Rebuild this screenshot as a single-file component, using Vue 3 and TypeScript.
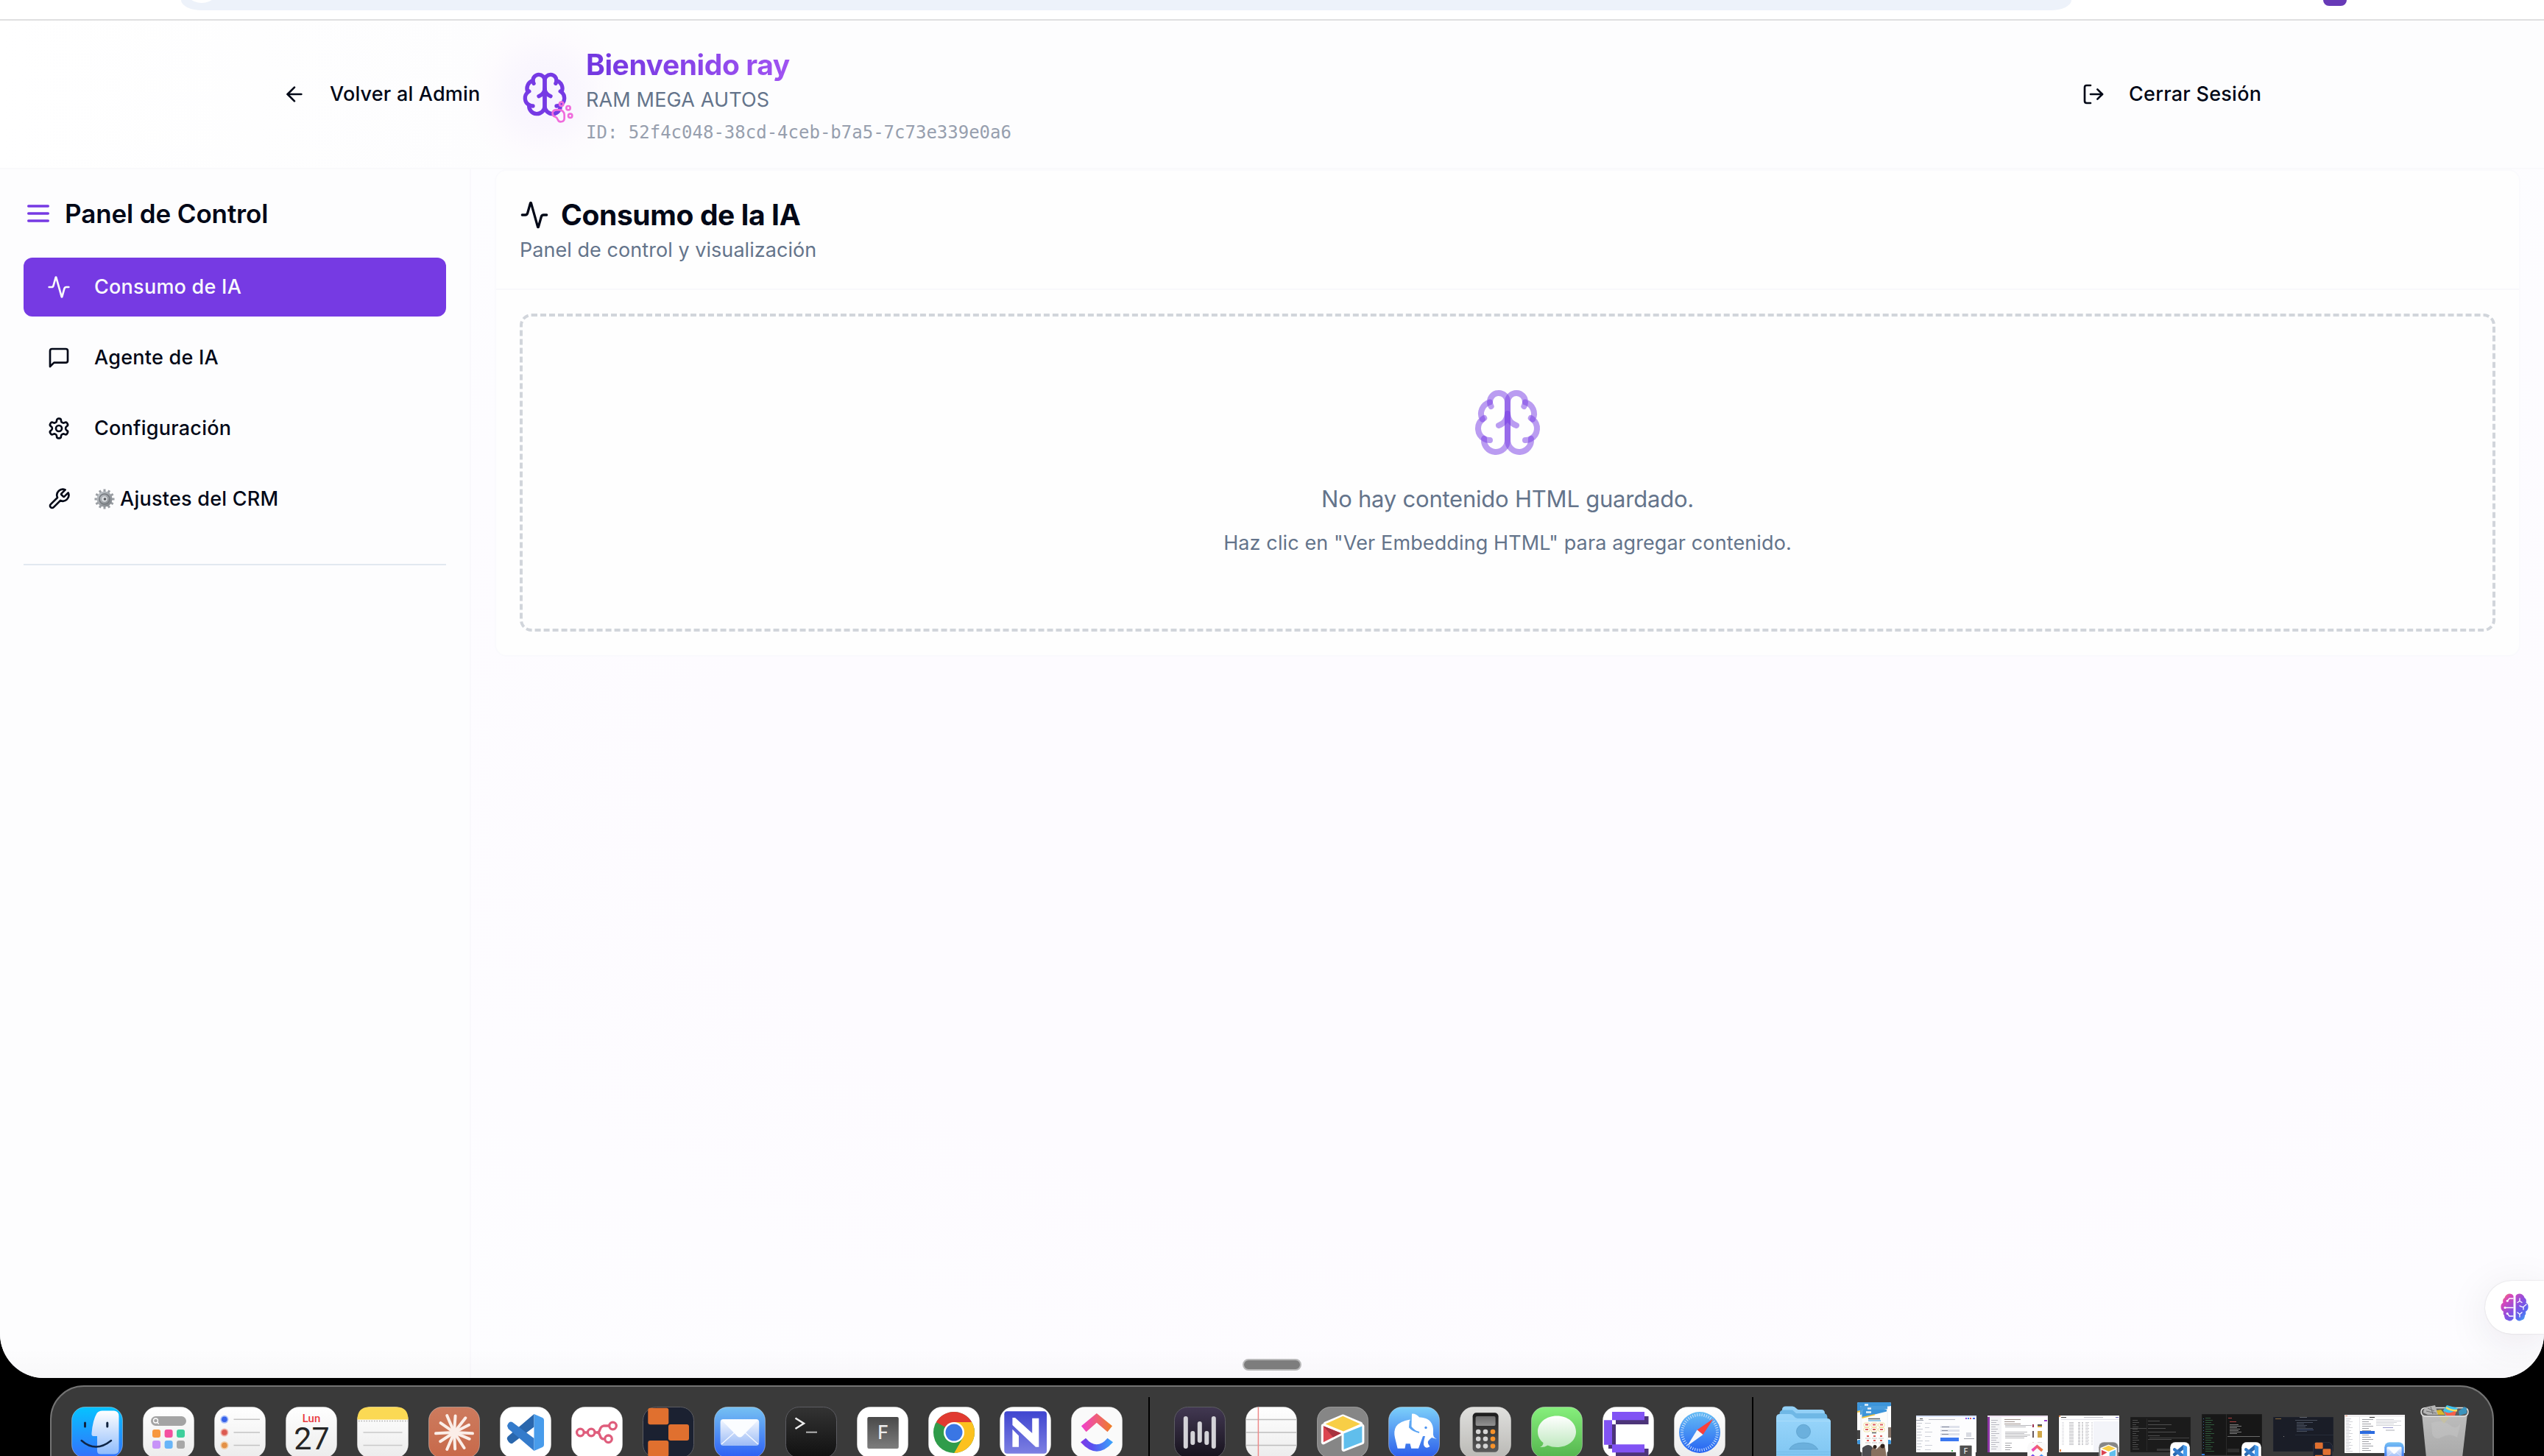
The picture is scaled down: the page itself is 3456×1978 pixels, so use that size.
<script setup lang="ts">
import { h, type FunctionalComponent } from 'vue'

const glyphs: Record<string, string[]> = {
  arrowLeft: ['m12 19-7-7 7-7', 'M19 12H5'],
  logOut: ['M9 21H5a2 2 0 0 1-2-2V5a2 2 0 0 1 2-2h4', 'm16 17 5-5-5-5', 'M21 12H9'],
  menu: ['M4 6h16', 'M4 12h16', 'M4 18h16'],
  activity: ['M22 12h-2.48a2 2 0 0 0-1.93 1.46l-2.35 8.36a.25.25 0 0 1-.48 0L9.24 2.18a.25.25 0 0 0-.48 0l-2.35 8.36A2 2 0 0 1 4.49 12H2'],
  message: ['M21 15a2 2 0 0 1-2 2H7l-4 4V5a2 2 0 0 1 2-2h14a2 2 0 0 1 2 2z'],
  settings: [
    'M12.22 2h-.44a2 2 0 0 0-2 2v.18a2 2 0 0 1-1 1.73l-.43.25a2 2 0 0 1-2 0l-.15-.08a2 2 0 0 0-2.73.73l-.22.38a2 2 0 0 0 .73 2.73l.15.1a2 2 0 0 1 1 1.72v.51a2 2 0 0 1-1 1.74l-.15.09a2 2 0 0 0-.73 2.73l.22.38a2 2 0 0 0 2.73.73l.15-.08a2 2 0 0 1 2 0l.43.25a2 2 0 0 1 1 1.73V20a2 2 0 0 0 2 2h.44a2 2 0 0 0 2-2v-.18a2 2 0 0 1 1-1.73l.43-.25a2 2 0 0 1 2 0l.15.08a2 2 0 0 0 2.73-.73l.22-.39a2 2 0 0 0-.73-2.73l-.15-.08a2 2 0 0 1-1-1.74v-.5a2 2 0 0 1 1-1.74l.15-.09a2 2 0 0 0 .73-2.73l-.22-.38a2 2 0 0 0-2.73-.73l-.15.08a2 2 0 0 1-2 0l-.43-.25a2 2 0 0 1-1-1.73V4a2 2 0 0 0-2-2z',
    'M15 12a3 3 0 1 1-6 0 3 3 0 0 1 6 0z',
  ],
  wrench: ['M14.7 6.3a1 1 0 0 0 0 1.4l1.6 1.6a1 1 0 0 0 1.4 0l3.77-3.77a6 6 0 0 1-7.94 7.94l-6.91 6.91a2.12 2.12 0 0 1-3-3l6.91-6.91a6 6 0 0 1 7.94-7.94l-3.76 3.76z'],
  brain: [
    'M12 5a3 3 0 1 0-5.997.125 4 4 0 0 0-2.526 5.77 4 4 0 0 0 .556 6.588A4 4 0 1 0 12 18Z',
    'M12 5a3 3 0 1 1 5.997.125 4 4 0 0 1 2.526 5.77 4 4 0 0 1-.556 6.588A4 4 0 1 1 12 18Z',
    'M15 13a4.5 4.5 0 0 1-3-4 4.5 4.5 0 0 1-3 4',
    'M17.599 6.5a3 3 0 0 0 .399-1.375',
    'M6.003 5.125A3 3 0 0 0 6.401 6.5',
    'M3.477 10.896a4 4 0 0 1 .585-.396',
    'M19.938 10.5a4 4 0 0 1 .585.396',
    'M6 18a4 4 0 0 1-1.967-.516',
    'M19.967 17.484A4 4 0 0 1 18 18',
  ],
  paw: [
    'M13 4a2 2 0 1 1-4 0 2 2 0 0 1 4 0z',
    'M20 8a2 2 0 1 1-4 0 2 2 0 0 1 4 0z',
    'M22 16a2 2 0 1 1-4 0 2 2 0 0 1 4 0z',
    'M9 10a5 5 0 0 1 5 5v3.5a3.5 3.5 0 0 1-6.84 1.045Q6.52 17.48 4.46 16.84A3.5 3.5 0 0 1 5.5 10Z',
  ],
}

const Icon: FunctionalComponent<{ name: string }> = (props) =>
  h(
    'svg',
    { viewBox: '0 0 24 24', fill: 'none', stroke: 'currentColor', 'stroke-width': 2, 'stroke-linecap': 'round', 'stroke-linejoin': 'round' },
    glyphs[props.name].map((d) => h('path', { d })),
  )
Icon.props = ['name']

interface NavItem { icon: string; label: string; active?: boolean; gear?: boolean }
const nav: NavItem[] = [
  { icon: 'activity', label: 'Consumo de IA', active: true },
  { icon: 'message', label: 'Agente de IA' },
  { icon: 'settings', label: 'Configuración' },
  { icon: 'wrench', label: 'Ajustes del CRM', gear: true },
]

const gearTeeth = Array.from({ length: 12 }, (_, i) => i * 30)
const rays = [-1, 33, 58, 88, 108, 142, 172, 198, 232, 262, 300, 332]
const ticks = Array.from({ length: 48 }, (_, i) => i * 7.5)

type Bar = [x: number, y: number, w: number, h: number, color: string]
const rows = (x: number, y0: number, y1: number, step: number, w: number[], color: string): Bar[] => {
  const out: Bar[] = []
  for (let y = y0, i = 0; y < y1; y += step, i++) out.push([x, y, w[i % w.length], 1, color])
  return out
}

interface Thumb { top: number; h: number; bg: string; edge: string; bars: Bar[]; badge: string }
const thumbs: Thumb[] = [
  {
    top: 39, h: 50, bg: '#fdfdfe', edge: '#f4f4f6', badge: 'form',
    bars: [
      [0, 0, 82, 2, '#d5dff6'], [5, 4, 4, 1, '#555'], [17, 5, 36, 1, '#b9bcc4'], [0, 6, 10, 1, '#9aa0ac'],
      ...rows(1, 10, 48, 4, [7, 5, 8, 6], '#c5c8d0'), ...rows(12, 10, 48, 6, [8, 6, 10], '#cdd0d8'),
      [67, 3, 2, 2, '#a04be0'], [70, 3, 2, 2, '#3b82f6'], [73, 3, 2, 2, '#e05a5a'], [77, 3, 3, 2, '#4a6cf0'],
      [33, 14, 26, 3, '#dfe2ec'], [33, 19, 26, 3, '#dfe2ec'], [33, 24, 26, 3, '#dfe2ec'], [35, 15, 10, 1, '#8b90a0'], [35, 20, 8, 1, '#8b90a0'], [35, 25, 9, 1, '#8b90a0'],
      [33, 30, 25, 5, '#3b78f0'], [68, 23, 7, 6, '#d9dbe2'], [65, 31, 14, 1, '#a5a8b2'], [48, 47, 2, 2, '#3faf4c'],
    ],
  },
  {
    top: 39, h: 50, bg: '#ffffff', edge: '#eeeeee', badge: 'click',
    bars: [
      [0, 0, 82, 2, '#ecdfee'], [0, 2, 3, 48, '#8e35a6'], [3, 2, 16, 48, '#f5f5f7'],
      ...rows(5, 6, 48, 3, [9, 7, 11, 6], '#b9bac2'), ...rows(23, 5, 12, 3, [22, 14], '#9c8f8a'),
      ...rows(24, 13, 17, 2, [36, 28], '#b7b7bb'), ...rows(24, 22, 31, 2, [30, 26, 34], '#b7b7bb'), ...rows(24, 37, 48, 3, [9, 7], '#a7a7ab'),
      [61, 12, 2, 4, '#9a3050'], [68, 12, 6, 2, '#555'], [68, 14, 6, 2, '#d8a83c'], [61, 21, 2, 9, '#6a5a60'], [68, 21, 6, 9, '#d2a848'], [61, 36, 2, 2, '#a04040'], [68, 36, 6, 2, '#666'], [77, 6, 4, 2, '#9a40c8'],
    ],
  },
  {
    top: 39, h: 50, bg: '#ffffff', edge: '#eeeeee', badge: 'air',
    bars: [
      [0, 0, 2, 2, '#e58a4a'], [3, 2, 7, 1, '#444'], [34, 2, 26, 1, '#c0c0c8'], [77, 2, 4, 1, '#6b62b8'], [3, 5, 79, 1, '#e2e2ea'], [47, 8, 35, 42, '#f3f4f9'],
      ...rows(4, 9, 40, 2, [3], '#e2e2e6'), ...rows(14, 9, 40, 2, [6], '#c2c2c6'), ...rows(26, 9, 40, 2, [3], '#b8b8bc'), ...rows(31, 9, 40, 2, [2], '#b8b8bc'), ...rows(36, 9, 40, 2, [5, 4], '#cbcbcf'), ...rows(44, 9, 40, 2, [2], '#dadade'),
      [1, 46, 2, 3, '#e58a4a'],
    ],
  },
  {
    top: 41, h: 48, bg: '#1b1b1b', edge: '#242424', badge: 'code',
    bars: [
      ...rows(3, 4, 46, 3, [7, 9, 5, 8], '#4c4c4c'), [0, 15, 22, 1, '#4a4a4a'], [22, 2, 1, 44, '#2a2a2a'],
      ...rows(24, 5, 34, 5, [16, 32, 24, 38], '#4e4e4e'), [26, 28, 54, 1, '#444'], [36, 43, 18, 3, '#3a3a3a'],
    ],
  },
  {
    top: 37, h: 56, bg: '#171717', edge: '#242424', badge: 'code',
    bars: [
      ...rows(5, 5, 52, 3, [7, 10, 8, 12], '#2f5a3a'), ...rows(2, 6, 50, 4, [1], '#3b6a9a'), [33, 0, 1, 56, '#2b2b2b'],
      [36, 5, 5, 1, '#b04040'], [38, 10, 9, 1, '#b04040'], ...rows(38, 14, 28, 2, [12, 16, 10, 14], '#7c7c7c'), [35, 30, 44, 1, '#6a6a6a'], [35, 47, 16, 5, '#2e2e2e'], [0, 54, 4, 2, '#2f7de0'],
    ],
  },
  {
    top: 41, h: 47, bg: '#1a1d27', edge: '#242833', badge: 'repl',
    bars: [
      [3, 2, 8, 1, '#8a6a3a'], [36, 0, 10, 1, '#60646e'], [30, 4, 30, 1, '#4a4f5c'], ...rows(32, 7, 20, 2, [22, 10, 14, 12], '#4a5160'), [36, 17, 19, 1, '#41527a'], [30, 24, 52, 1, '#262b38'], [14, 26, 1, 1, '#8a8a8a'],
    ],
  },
  {
    top: 38, h: 52, bg: '#ffffff', edge: '#f2f2f2', badge: 'mail',
    bars: [
      [0, 0, 82, 3, '#f0eff0'], [1, 1, 3, 1, '#e58a6a'], [34, 3, 7, 1, '#333'], ...rows(2, 5, 50, 2, [7, 5, 9, 4], '#d2d3d8'), [20, 3, 1, 49, '#e6e6ea'], ...rows(24, 6, 50, 3, [15, 9, 12], '#9fa0a6'),
      [21, 22, 20, 4, '#2b6be0'], ...rows(43, 6, 16, 2, [24, 34, 28], '#d2d3d8'), [52, 17, 14, 1, '#9a9bd0'], [56, 20, 12, 2, '#d5d6da'],
    ],
  },
]
</script>

<template>
  <div class="stage">
    <svg class="defs" aria-hidden="true">
      <defs>
        <linearGradient id="gFinder" x2="0" y2="1"><stop stop-color="#06c3ff" /><stop offset="1" stop-color="#3470fb" /></linearGradient>
        <linearGradient id="gFace" x2="0" y2="1"><stop stop-color="#fff" /><stop offset="1" stop-color="#8fbcfc" /></linearGradient>
        <linearGradient id="gWhite" x2="0" y2="1"><stop stop-color="#fff" /><stop offset="1" stop-color="#ececec" /></linearGradient>
        <linearGradient id="gMail" x2="0" y2="1"><stop stop-color="#76c1f3" /><stop offset="1" stop-color="#2c5ff4" /></linearGradient>
        <linearGradient id="gEnv" x2="0" y2="1"><stop stop-color="#f4f8ff" /><stop offset="1" stop-color="#9dbcf6" /></linearGradient>
        <linearGradient id="gTerm" x2="0" y2="1"><stop stop-color="#333" /><stop offset="1" stop-color="#101010" /></linearGradient>
        <linearGradient id="gN" x2="0" y2="1"><stop stop-color="#3f45d0" /><stop offset="1" stop-color="#7d80e2" /></linearGradient>
        <linearGradient id="gUp"><stop stop-color="#f03fd0" /><stop offset="1" stop-color="#ee7f22" /></linearGradient>
        <linearGradient id="gDown"><stop stop-color="#8338e8" /><stop offset=".35" stop-color="#5a50ef" /><stop offset="1" stop-color="#3aa6fb" /></linearGradient>
        <linearGradient id="gWave" x2="0" y2="1"><stop stop-color="#423852" /><stop offset="1" stop-color="#16121c" /></linearGradient>
        <linearGradient id="gTable" x2="0" y2="1"><stop stop-color="#7cd0fa" /><stop offset="1" stop-color="#2b5cea" /></linearGradient>
        <linearGradient id="gCalc" x2="0" y2="1"><stop stop-color="#e0e0de" /><stop offset="1" stop-color="#bab9b5" /></linearGradient>
        <linearGradient id="gCalcBody" x2="0" y2="1"><stop stop-color="#1c1c1c" /><stop offset="1" stop-color="#5b5b5b" /></linearGradient>
        <linearGradient id="gScreen" x2="0" y2="1"><stop stop-color="#6c6c6c" /><stop offset="1" stop-color="#929292" /></linearGradient>
        <linearGradient id="gMsg" x2="0" y2="1"><stop stop-color="#86ef7c" /><stop offset="1" stop-color="#55b54e" /></linearGradient>
        <linearGradient id="gBubble" x2="0" y2="1"><stop stop-color="#fff" /><stop offset="1" stop-color="#bfe8bf" /></linearGradient>
        <linearGradient id="gSafari" x2="0" y2="1"><stop stop-color="#66bdf4" /><stop offset="1" stop-color="#2562f3" /></linearGradient>
        <linearGradient id="gFolder" x2="0" y2="1"><stop stop-color="#9ad6fb" /><stop offset="1" stop-color="#7fc6f2" /></linearGradient>
        <linearGradient id="gClaude" x2="0" y2="1"><stop stop-color="#cd7b5e" /><stop offset="1" stop-color="#c7694a" /></linearGradient>
        <linearGradient id="gTrash" x2="0" y2="1"><stop stop-color="#bdbdbd" /><stop offset="1" stop-color="#aaaaaa" /></linearGradient>
        <linearGradient id="gF" x2="0" y2="1"><stop stop-color="#494949" /><stop offset="1" stop-color="#7d7d7d" /></linearGradient>
        <linearGradient id="gGear" x2="1" y2="1"><stop stop-color="#c9ced3" /><stop offset="1" stop-color="#777b80" /></linearGradient>
        <linearGradient id="gMind" x1="0" y1="0" x2="1" y2="1"><stop stop-color="#f0a03a" /><stop offset=".2" stop-color="#dc48b8" /><stop offset=".52" stop-color="#8a4fe0" /><stop offset=".75" stop-color="#5b64ee" /><stop offset="1" stop-color="#38c4f8" /></linearGradient>
        <g id="logoCode">
          <path d="M46.5 10 V27.5 L17 50 Q13 51 10 44.5 Q9 42 12 39.5Z" fill="#2a67ad" />
          <path d="M10 26 Q12.500 19 17 21 L46.500 43 V60 L11.500 30Z" fill="#347bcb" />
          <path d="M46.500 10 L58 15 Q60 16 60 18 V52 Q60 54 58 55 L46.500 60Z" fill="#489ceb" />
        </g>
        <g id="logoClick">
          <path d="M34.800 9 L56 26.300 L49.500 34.300 L34.800 21.700 L20.600 34.300 L13.900 26.300Z" fill="url(#gUp)" />
          <path d="M13 48.300 L20 42.700 Q34.800 60 49.500 42.700 L57 48.300 Q35 73 13 48.300Z" fill="url(#gDown)" />
        </g>
        <g id="logoRepl" fill="#e0702f">
          <rect x="7.300" y="1.700" width="28" height="22.500" rx="3" />
          <rect x="35" y="24" width="28" height="22" rx="3" />
          <rect x="7.300" y="46" width="28" height="22" rx="3" />
        </g>
        <g id="logoMail">
          <rect x="8.600" y="17" width="52.600" height="36" rx="4" fill="url(#gEnv)" />
          <path d="M10 51 L28 35 M60 51 L42 35" stroke="#f4f8ff" stroke-width="1.500" />
          <path d="M10 18 H60 L38.500 40 Q35 43 31.500 40Z" fill="#fbfdff" />
        </g>
      </defs>
    </svg>

    <div class="window">
      <div class="toolbar">
        <div class="omnibox"><span class="site-info"></span></div>
        <div class="extension"></div>
      </div>

      <header class="header">
        <button class="link back"><Icon name="arrowLeft" class="i32" /><span>Volver al Admin</span></button>
        <div class="brand">
          <div class="logo"><Icon name="brain" class="i64" /><Icon name="paw" class="paw" /></div>
          <div class="who">
            <h1>Bienvenido ray</h1>
            <p class="company">RAM MEGA AUTOS</p>
            <p class="uid">ID: 52f4c048-38cd-4ceb-b7a5-7c73e339e0a6</p>
          </div>
        </div>
        <button class="link out"><Icon name="logOut" class="i32" /><span>Cerrar Sesión</span></button>
      </header>

      <div class="body">
        <aside class="sidebar">
          <h2><Icon name="menu" class="i40" />Panel de Control</h2>
          <nav>
            <a v-for="n in nav" :key="n.label" :class="{ active: n.active }">
              <Icon :name="n.icon" class="i32" />
              <svg v-if="n.gear" class="gear" viewBox="0 0 28 28">
                <rect v-for="a in gearTeeth" :key="a" x="12.500" y=".500" width="3" height="6" fill="#9a9ea3" :transform="`rotate(${a} 14 14)`" />
                <circle cx="14" cy="14" r="10.500" fill="url(#gGear)" />
                <circle cx="14" cy="14" r="7" fill="none" stroke="#75797e" stroke-width="1.500" />
                <circle cx="14" cy="14" r="3.800" fill="#d9dcdf" /><circle cx="14.500" cy="14" r="1.800" fill="#55585c" />
              </svg>
              <span>{{ n.label }}</span>
            </a>
          </nav>
          <hr />
        </aside>

        <main class="main">
          <section class="card">
            <div class="card-head">
              <h3><Icon name="activity" class="i40" />Consumo de la IA</h3>
              <p>Panel de control y visualización</p>
            </div>
            <div class="card-body">
              <div class="empty">
                <Icon name="brain" class="i96" />
                <p class="lead">No hay contenido HTML guardado.</p>
                <p class="hint">Haz clic en "Ver Embedding HTML" para agregar contenido.</p>
              </div>
            </div>
          </section>
        </main>
      </div>

      <div class="bubble">
        <svg viewBox="0 0 38 38">
          <path d="M17.500 3.500 V34.500 Q14 39 9.500 36.500 Q5 35.500 5 30 Q3 28 4 25 Q0 22.500 .500 18 Q0 15 3.500 12.500 Q2 8 5.500 6 Q7 1 12 .500 Q16 .500 17.500 3.500Z M20.500 3.500 V34.500 Q24 39 28.500 36.500 Q33 35.500 33 30 Q35 28 34 25 Q38 22.500 37.500 18 Q38 15 34.500 12.500 Q36 8 32.500 6 Q31 1 26 .500 Q22 .500 20.500 3.500Z" fill="url(#gMind)" />
          <g fill="none" stroke="#fff" stroke-width="1.300" stroke-linecap="round"><path d="M17 7H12L9.500 10M17 19.500H6M17 31H12L9.500 28M26 7v3.500l-3 2M26 10.500l3 2M26 17q3 2 5 1.500l4-3.500M31 18.500V22M23 26l3 2.500 3-2.500M26 28.500V32" /></g>
          <circle cx="9.200" cy="10.200" r="1.500" fill="#fff" /><circle cx="6" cy="19.500" r="1.500" fill="#fff" /><circle cx="9.200" cy="27.500" r="1.500" fill="#fff" />
        </svg>
      </div>
      <div class="handle"></div>
    </div>

    <div class="dock">
      <div class="apps">
        <svg viewBox="0 0 70 70">
          <rect class="tile" fill="url(#gFinder)" />
          <path d="M42 5.500 H58 Q64.500 6 64.500 13 V58 Q64.500 64.500 58 64.500 H40 Q35 64.500 35 60 V40 H30 Q27 40 27.500 36 Q29 18 34.500 9 Q37 5.500 42 5.500Z" fill="url(#gFace)" />
          <path d="M18.500 22v5M48.800 22v5" stroke="#10233f" stroke-width="3" stroke-linecap="round" />
          <path d="M13.700 46 Q33 63 54 46" fill="none" stroke="#0f2647" stroke-width="2.500" stroke-linecap="round" />
        </svg>
        <svg viewBox="0 0 70 70">
          <rect class="tile" fill="url(#gWhite)" />
          <rect x="11" y="13" width="48" height="13" rx="6.500" fill="#a4a4a4" />
          <circle cx="17.500" cy="19" r="3" fill="none" stroke="#fff" stroke-width="1.300" /><path d="M19.800 21.500l2 2" stroke="#fff" stroke-width="1.300" />
          <rect x="13" y="31" width="11" height="11" rx="3" fill="#f7983f" /><rect x="29.600" y="31" width="11" height="11" rx="3" fill="#f4509f" /><rect x="46" y="31" width="11" height="11" rx="3" fill="#3fcf9c" />
          <rect x="13" y="46" width="11" height="11" rx="3" fill="#c793f8" /><rect x="29.600" y="46" width="11" height="11" rx="3" fill="#68b5f8" /><rect x="46" y="46" width="11" height="11" rx="3" fill="#a8a8a8" />
        </svg>
        <svg viewBox="0 0 70 70">
          <rect class="tile" fill="url(#gWhite)" />
          <circle cx="13.900" cy="17.300" r="5.500" fill="#a9bff8" /><circle cx="13.900" cy="17.300" r="3.800" fill="#3763ea" />
          <circle cx="13.900" cy="35" r="5.500" fill="#efb5ae" /><circle cx="13.900" cy="35" r="3.800" fill="#dc5a50" />
          <circle cx="13.900" cy="52.500" r="5.500" fill="#f1cda6" /><circle cx="13.900" cy="52.500" r="3.800" fill="#e39045" />
          <path d="M26.500 17.300H62M26.500 35H62M26.500 52.500H62" stroke="#c4c4c4" stroke-width="1.500" />
        </svg>
        <svg viewBox="0 0 70 70">
          <rect class="tile" fill="url(#gWhite)" />
          <text x="35" y="20.700" class="dow">Lun</text><text x="35.500" y="58" class="dom">27</text>
        </svg>
        <svg viewBox="0 0 70 70">
          <rect class="tile" fill="url(#gWhite)" />
          <path d="M.500 17.500 Q.500 0 17.500 .500 H53 Q69.500 0 69.500 17.500Z" fill="#fbd954" />
          <path d="M2 19.500H69" stroke="#b0b0b0" stroke-width="1.500" stroke-dasharray="1.500 2" />
          <path d="M8.500 35H61.500M8.500 52.500H61.500" stroke="#c9c9c9" stroke-width="1.500" />
        </svg>
        <svg viewBox="0 0 70 70">
          <rect class="tile" fill="url(#gClaude)" />
          <g stroke="#fbeee8" stroke-width="4" stroke-linecap="round"><line v-for="(a, i) in rays" :key="a" x1="35" y1="34" x2="35" :y2="i % 2 ? 10 : 12.500" :transform="`rotate(${a + 5} 35 35)`" /></g>
        </svg>
        <svg viewBox="0 0 70 70"><rect class="tile" fill="#fff" /><use href="#logoCode" /></svg>
        <svg viewBox="0 0 70 70">
          <rect class="tile" fill="#fff" />
          <g fill="none" stroke="#df5d7c" stroke-width="3.300"><circle cx="12.400" cy="35" r="4.800" /><circle cx="27.200" cy="35" r="4.800" /><circle cx="56.500" cy="26" r="4.800" /><circle cx="50.500" cy="43.800" r="4.800" /><path d="M17.500 35h5M32 35h3q3 0 4-4t5-5h7.500M35 35q3 0 4 4t4 4.800h2.500" /></g>
        </svg>
        <svg viewBox="0 0 70 70"><rect class="tile dark" fill="#1b2131" /><use href="#logoRepl" /></svg>
        <svg viewBox="0 0 70 70"><rect class="tile" fill="url(#gMail)" /><use href="#logoMail" /></svg>
        <svg viewBox="0 0 70 70"><rect class="tile dark" fill="url(#gTerm)" /><path d="M13.500 15.500L25 22.700L13.500 30" fill="none" stroke="#efefef" stroke-width="2.500" /><path d="M28 34.700H43" stroke="#b5b5b5" stroke-width="2" /></svg>
        <svg viewBox="0 0 70 70"><rect class="tile" fill="#fff" /><rect x="14.300" y="14" width="42.500" height="43" rx="2" fill="url(#gF)" /><text x="35.500" y="44" class="letter">F</text></svg>
        <svg viewBox="0 0 70 70">
          <rect class="tile" fill="#fff" />
          <circle cx="35" cy="35" r="28" fill="#2f9c4a" />
          <path d="M35 35 L10.800 21 A28 28 0 0 1 59.200 21Z" fill="#e13a30" /><path d="M35 21H59.200A28 28 0 0 1 35 63L47 42Z" fill="#fcc11f" /><path d="M10.800 21L23 42L35 21Z" fill="#e13a30" /><path d="M10.800 21L22.500 42L27 30Z" fill="#2f9c4a" /><path d="M35 63L47 42H35Z" fill="#2f9c4a" />
          <circle cx="35" cy="35" r="14" fill="#fff" /><circle cx="35" cy="35" r="11.500" fill="#3a76e4" />
        </svg>
        <svg viewBox="0 0 70 70"><rect class="tile" fill="#fff" /><rect x="6.300" y="6.300" width="57.700" height="57.500" rx="4" fill="url(#gN)" /><path d="M17.400 15H21L44.200 36V15.700H53.300V54.700H49L17.400 25ZM17.400 30.700L26 39.500V54.700H17.400Z" fill="#fff" /></svg>
        <svg viewBox="0 0 70 70"><rect class="tile" fill="#fafafa" /><use href="#logoClick" /></svg>
      </div>
      <i class="sep"></i>
      <div class="apps second">
        <svg viewBox="0 0 70 70"><rect class="tile dark" fill="url(#gWave)" /><path d="M15.800 16V54M25.300 36V49M34.800 23V46M44.300 36V49M53.800 16V54" stroke="#d4d3d8" stroke-width="6" stroke-linecap="round" /></svg>
        <svg viewBox="0 0 70 70"><rect class="tile" fill="url(#gWhite)" /><path d="M.500 17.500H69.500M.500 35H69.500M.500 52.500H69.500" stroke="#bdbdbd" stroke-width="1.300" /><path d="M17.400 .500V69" stroke="#ee8a8a" stroke-width="1.500" /></svg>
        <svg viewBox="0 0 70 70">
          <rect class="tile" fill="#868686" />
          <g stroke="#fff" stroke-width="6" stroke-linejoin="round" fill="#fff"><path d="M35.300 13.500L59 23.500L36 33L11.600 23.500Z" /><path d="M8.800 26.300L32.900 36L8.800 48.300Z" /><path d="M36.500 36.500L61.400 26.500V48.300L36.500 58Z" /></g>
          <path d="M35.300 12.800L59 23.500L36 33.500L11.600 23.500Z" fill="#f8ce46" /><path d="M8.800 26.300L32.900 36L8.800 48.300Z" fill="#dc4550" /><path d="M8.800 26.300L32.900 36L22 41.500Z" fill="#a8323f" /><path d="M36.500 36.500L61.400 26.500V48.300L36.500 58Z" fill="#60beec" />
        </svg>
        <svg viewBox="0 0 70 70">
          <rect class="tile" fill="url(#gTable)" />
          <path d="M29.500 17.500Q15 20 10.500 27Q7 33 9 42L12.600 56.700H22.500L23.700 50.300H29.600L31.200 56.700H41L47 40H50Q47 50 48.500 53Q51 58 56.500 54Q53 50 54 47Q56 44 59 42L66 44Q60 41 61 36Q62 20 51 16Q46 14 42.300 14.500Q37 9 32 9.700L31.500 27Q35 32 43 35Q32 32 29 28Z" fill="#fff" />
          <circle cx="51" cy="28.500" r="1.700" fill="#4d95f2" /><path d="M29.800 19L29 28Q33 33 42 35" fill="none" stroke="#5aa5f4" stroke-width="2" />
        </svg>
        <svg viewBox="0 0 70 70">
          <rect class="tile" fill="url(#gCalc)" /><rect x="17.600" y="8.300" width="35" height="53.500" rx="5" fill="url(#gCalcBody)" /><rect x="21.600" y="13" width="27" height="13" rx="2" fill="url(#gScreen)" />
          <template v-for="y in [34, 43.8, 53.6]" :key="y"><circle cx="25.200" :cy="y" r="3.300" fill="#d4d4d4" /><circle cx="35" :cy="y" r="3.300" fill="#d4d4d4" /><circle cx="45" :cy="y" r="3.300" fill="#f7922a" /></template>
        </svg>
        <svg viewBox="0 0 70 70"><rect class="tile" fill="url(#gMsg)" /><path d="M35 12.500C20 12.500 9 22 9 34C9 41 12.500 46 16.500 49Q16.500 53 12 55Q18 55.500 22.500 52.500Q28 55 35 55C50 55 61 46 61 34C61 22 50 12.500 35 12.500Z" fill="url(#gBubble)" /></svg>
        <svg viewBox="0 0 70 70">
          <rect class="tile" fill="#fff" />
          <path d="M18 13H62.500V24H18ZM13 24H18V51.500H13ZM8 51.500H18V57H8ZM18 57H62.500V68.500H18Z" fill="#4c3479" /><path d="M13 7H57V18.300H13ZM2 18.300H13V51.700H2ZM13 51.300H57V62.300H13Z" fill="#8153f4" />
        </svg>
        <svg viewBox="0 0 70 70">
          <rect class="tile" fill="url(#gWhite)" /><circle cx="35" cy="35" r="28" fill="url(#gSafari)" />
          <line v-for="a in ticks" :key="a" x1="35" y1="9" x2="35" y2="13" stroke="#cfe4fb" stroke-width="1" :transform="`rotate(${a} 35 35)`" />
          <path d="M53.700 16.300L39.500 38L31.500 31.500Z" fill="#fb3f3b" /><path d="M18 53.500L31.500 31.500L39.500 38Z" fill="#f4f6fa" />
        </svg>
      </div>
      <i class="sep right"></i>

      <svg class="folder" viewBox="0 0 74 70">
        <path d="M8 5Q8 .500 13 .500H22Q25 .500 27 3T31 5H61Q66 5 66 10V30H8Z" fill="#93d0f6" />
        <path d="M4.500 11Q4.500 5.500 10 5.500H22L27 10H64Q69.500 10 69.500 16V40H4.500Z" fill="#6fb8e6" />
        <path d="M0 16Q0 11 5 11H18Q22 11 24 14T29 17H69Q74 17 74 22V70H0Z" fill="url(#gFolder)" />
        <path d="M0 20.500H74" stroke="#a9dcfb" stroke-width="1" /><circle cx="37" cy="34.700" r="9.500" fill="#6bb0dd" stroke="#5c9fcc" stroke-width=".800" /><path d="M17.700 59Q22 50 37 50T56.600 59Z" fill="#6bb0dd" stroke="#5c9fcc" stroke-width=".800" />
        <path d="M0 62.500H74M0 65.500H74" stroke="#76bce8" stroke-width="1" />
      </svg>

      <svg class="stack" viewBox="0 0 46 75">
        <rect width="46" height="57" rx="2" fill="#fff" /><path d="M0 2Q0 0 2 0H44Q46 0 46 2V5L0 12Z" fill="#3d95da" /><path d="M0 12L20 9V11L0 14Z" fill="#f0c23c" /><rect y="51" width="46" height="6" rx="2" fill="#3d95da" /><rect y="38" width="6" height="12" fill="#444" /><rect x="41" y="34" width="5" height="14" fill="#8a766a" />
        <rect x="4" y="5" width="38" height="63" rx="2" fill="#f3f5f7" /><path d="M4 7Q4 5 6 5H41V9L4 17Z" fill="#4b9ddc" />
        <rect x="6.500" y="10" width="34" height="65" rx="2" fill="#fdfdfb" /><path d="M6.500 12Q6.500 10 8.500 10H40V12.500L6.500 21Z" fill="#3d95da" /><path d="M6.500 20L24 16V17.500L6.500 22Z" fill="#f0c23c" />
        <path d="M10 3.500h5M14 8.500h5M12 13.500h7" stroke="#e7f2fb" stroke-width="2.500" /><path d="M15 22.500H31M20 41.500H26" stroke="#5a5f66" stroke-width="1.500" /><path d="M15 25H32" stroke="#6ab4e0" stroke-width="1.500" />
        <g fill="#fff" stroke="#ead47c" stroke-width=".700"><rect x="9" y="28" width="8" height="5.500" rx="2" /><rect x="19" y="28" width="8" height="5.500" rx="2" /><rect x="29" y="28" width="8" height="5.500" rx="2" /><rect x="9" y="34.500" width="8" height="5.500" rx="2" /><rect x="19" y="34.500" width="8" height="5.500" rx="2" /><rect x="29" y="34.500" width="8" height="5.500" rx="2" /></g>
        <path d="M11 30.500h4M21 30.500h4M31 30.500h4M11 37h4M21 37h4M31 37h4M13 46h3M22 46h3M31 46h3M13 52h3M22 52h3M31 52h3" stroke="#dd5f5c" stroke-width="1.800" /><path d="M11 49h7M20 49h7M29 49h7M11 55h7M20 55h7M29 55h7" stroke="#b9b9bd" stroke-width=".800" />
        <path d="M7 62Q16 54 21 62V75H7Z" fill="#4a4b4f" /><path d="M19 66Q22 57 26 64L30 60Q35 55 38 62L40 75H19Z" fill="#87705f" /><circle cx="24" cy="60.500" r="2.500" fill="#30231c" /><circle cx="34.500" cy="59.500" r="3" fill="#30231c" />
      </svg>

      <div class="thumbs">
        <div v-for="(t, i) in thumbs" :key="i" class="thumb" :style="{ marginTop: t.top + 'px' }">
          <svg class="shot" :viewBox="`0 0 82 ${t.h}`" :style="{ height: t.h + 'px' }">
            <rect width="82" :height="t.h" rx="1" :fill="t.bg" :stroke="t.edge" />
            <rect v-for="(b, k) in t.bars" :key="k" :x="b[0]" :y="b[1]" :width="b[2]" :height="b[3]" :fill="b[4]" />
          </svg>
          <svg class="badge" viewBox="0 0 70 70" :style="{ top: 75 - t.top + 'px' }">
            <template v-if="t.badge === 'form'"><rect class="tile" fill="#fff" /><rect x="14" y="12" width="42" height="43" rx="2" fill="#4f4f4f" /><text x="35.500" y="42" class="letter">F</text></template>
            <template v-else-if="t.badge === 'click'"><rect class="tile" fill="#fafafa" /><use href="#logoClick" /></template>
            <template v-else-if="t.badge === 'air'"><rect class="tile" fill="#868686" /><path d="M35 9L64 21V50L35 63L6 50V21Z" fill="#fff" /><path d="M35 12L59 22.500L35 33L11 22.500Z" fill="#f8ce46" /><path d="M10 28L30 37L10 48Z" fill="#dc4550" /><path d="M38 37L60 27V48L38 58Z" fill="#60beec" /></template>
            <template v-else-if="t.badge === 'code'"><rect class="tile" fill="#fff" /><use href="#logoCode" /></template>
            <template v-else-if="t.badge === 'repl'"><rect class="tile dark" fill="#1b2131" /><use href="#logoRepl" /></template>
            <template v-else><rect class="tile" fill="url(#gMail)" /><use href="#logoMail" /></template>
          </svg>
        </div>
      </div>

      <svg class="trash" viewBox="0 0 66 72">
        <path d="M2 12L8 72H57L64 12Z" fill="url(#gTrash)" />
        <path d="M1 10Q1 4.500 8 4.500H58Q65 4.500 65 10Q65 16 58 16H8Q1 16 1 10Z" fill="#5f5f5f" stroke="#e8e8e8" stroke-width="1.500" />
        <path d="M4 11Q4 5 10 3L20 1L22 7L26 14H10Z" fill="#b4b4b4" /><path d="M10 5L19 9M8 9L22 12M14 3L17 13" stroke="#707070" stroke-width="1" />
        <path d="M22 8L28 7L34 14H24Z" fill="#d8b62c" /><path d="M36 1L51 5L46 15H34L31 8Z" fill="#3fc1ee" /><path d="M32 9Q40 15 50 6L47 15H35Z" fill="#f5604a" /><path d="M35 4Q42 9 50 8" stroke="#f9e25c" stroke-width="2.500" fill="none" /><path d="M52 9L60 3L63 5V12L53 15Z" fill="#3b93bd" />
        <path d="M15 25Q30 20 40 28T55 24L50 45Q40 38 30 44T16 40Z" fill="#c6c6c6" opacity=".5" /><path d="M25 17L32 26L40 17" fill="#cfc58e" opacity=".5" />
      </svg>
    </div>
  </div>
</template>

<style>
body { background: #000; overflow: hidden; }
</style>

<style scoped>
.stage { width: 3456px; height: 1978px; overflow: hidden; background: #000; display: flex; flex-direction: column; font-family: Inter, "Liberation Sans", sans-serif; color: #020817; }
.defs { position: absolute; width: 0; height: 0; }
.stage h1, .stage h2, .stage h3, .stage p { margin: 0; }
button { border: 0; background: none; font: inherit; color: inherit; padding: 0; }
svg { display: block; flex: none; }
.i32 { width: 32px; height: 32px; }
.i40 { width: 40px; height: 40px; }
.i64 { width: 64px; height: 64px; }
.i96 { width: 96px; height: 96px; }

.window { position: relative; flex: none; height: 1872px; border-radius: 0 0 60px 60px; overflow: hidden; background: #fdfbff; display: flex; flex-direction: column; }
.window::after { content: ""; position: absolute; left: 0; right: 0; bottom: 0; height: 40px; background: linear-gradient(rgba(0, 0, 0, 0), rgba(0, 0, 0, .02)); pointer-events: none; }

.toolbar { height: 26px; flex: none; border-bottom: 2px solid #dfdfe0; background: #fff; display: flex; align-items: flex-start; padding-left: 246px; }
.omnibox { width: 2568px; height: 14px; border-radius: 0 0 28px 28px / 0 0 14px 14px; background: #edf2fa; overflow: hidden; }
.site-info { display: block; width: 52px; height: 52px; margin: -48px 0 0 2px; border-radius: 50%; background: #fff; }
.extension { width: 32px; height: 8px; margin-left: 342px; border-radius: 0 0 8px 8px; background: #673ab7; }

.header { height: 200px; flex: none; border-bottom: 2px solid #f9f9fb; background: linear-gradient(90deg, #fff, #fdfdfe 20%); display: flex; align-items: center; padding: 0 384px; overflow: hidden; }
.link { position: relative; z-index: 1; display: flex; align-items: center; gap: 32px; font-size: 27px; font-weight: 500; line-height: 40px; white-space: nowrap; }
.back { letter-spacing: .2px; width: 324px; }
.out { margin-left: auto; width: 244px; letter-spacing: .25px; }
.brand { display: flex; align-items: center; gap: 24px; }
.logo { position: relative; color: #763ae4; border-radius: 50%; }
.logo::before { content: ""; position: absolute; inset: -76px; border-radius: 50%; background: radial-gradient(circle closest-side, #f7f3fe, #faf7fe 45%, #fdfbfe 75%, rgba(253, 253, 254, 0)); }
.logo .i64 { position: relative; }
.paw { position: absolute; right: -8px; bottom: -8px; width: 32px; height: 32px; color: #f06cdc; }
.who { position: relative; z-index: 1; }
.who h1 { font-size: 39px; line-height: 56px; font-weight: 700; letter-spacing: -.4px; width: 278px; white-space: nowrap; background: linear-gradient(90deg, #7237e0, #a053f2); -webkit-background-clip: text; background-clip: text; color: transparent; }
.who .company { font-size: 27px; line-height: 40px; letter-spacing: .15px; color: #64748b; }
.who .uid { margin-top: 8px; font: 24px/32px "DejaVu Sans Mono", "Liberation Mono", monospace; color: #979fae; }

.body { flex: 1; display: flex; min-height: 0; }
.sidebar { width: 640px; flex: none; box-sizing: border-box; padding: 32px 32px 0; background: #fdfdfe; border-right: 2px solid #f9f8fc; }
.sidebar h2 { display: flex; align-items: center; gap: 16px; height: 56px; font-size: 35px; font-weight: 600; letter-spacing: -.12px; }
.sidebar h2 svg { color: #7639e3; }
nav { margin: 32px 0 48px; width: 574px; display: flex; flex-direction: column; gap: 16px; }
nav a { height: 80px; border-radius: 12px; display: flex; align-items: center; padding-left: 32px; font-size: 27px; line-height: 38px; font-weight: 500; letter-spacing: .25px; }
nav a span { padding-bottom: 1px; }
nav a .i32 { margin-right: 32px; }
nav a.active { background: #763ae3; color: #f8fafc; }
.gear { width: 28px; height: 28px; margin-right: 7px; }
.sidebar hr { margin: 0; width: 574px; border: 0; height: 2px; background: #e2e8f0; }

.main { flex: 1; padding: 0 32px; background: radial-gradient(ellipse at 55% 50%, #fdfbff, #fdfbff 55%, #fdfdff); }
.card { box-sizing: border-box; height: 662px; border: 2px solid #fafafd; border-radius: 16px; background: #fefefe; }
.card-head { padding: 32px; border-bottom: 2px solid #f8f8fb; }
.card-head h3 { display: flex; align-items: center; gap: 16px; font-size: 39px; line-height: 56px; height: 56px; font-weight: 700; letter-spacing: -.38px; }
.card-head p { font-size: 27px; line-height: 40px; letter-spacing: .05px; color: #64748b; }
.card-body { padding: 32px; }
.empty { box-sizing: border-box; height: 432px; border: 4px dashed #d1d5db; border-radius: 16px; padding-top: 96px; display: flex; flex-direction: column; align-items: center; color: #64748b; }
.empty .i96 { color: rgba(118, 58, 228, .5); }
.empty .lead { margin-top: 32px; font-size: 31px; line-height: 48px; letter-spacing: -.22px; }
.empty .hint { margin-top: 16px; font-size: 27px; line-height: 40px; letter-spacing: .12px; }

.bubble { position: absolute; right: 0; top: 1740px; width: 80px; height: 72px; box-sizing: border-box; padding: 17px 0 0 21px; border-radius: 36px 0 0 36px; background: #fff; box-shadow: 0 0 2px rgba(0, 0, 0, .16), 0 12px 60px rgba(30, 10, 40, .09); }
.bubble svg { width: 38px; height: 38px; }
.handle { position: absolute; left: 1688px; top: 1846px; width: 80px; height: 16px; box-sizing: border-box; border: 2px solid #b9b9ba; border-radius: 8px; background: #7d7d7d; z-index: 1; }

.dock { margin: 10px 68px 0; height: 150px; flex: none; box-sizing: border-box; border: 2px solid #747474; border-radius: 46px; background: #3a3a3a; display: flex; align-items: flex-start; padding-left: 27px; }
.apps { display: flex; gap: 27px; padding-top: 27px; }
.apps svg { width: 70px; height: 70px; }
.apps.second { margin-left: 33px; }
.tile { x: .5px; y: .5px; width: 69px; height: 69px; rx: 18px; stroke: rgba(255, 255, 255, .35); stroke-width: 1px; }
.tile.dark { stroke: #5c5c62; }
.sep { width: 2px; height: 130px; margin: 14px 0 0 35px; background: #000; }
.sep.right { margin-left: 36px; }
.folder { width: 74px; height: 70px; margin: 26px 0 0 31px; }
.stack { width: 46px; height: 75px; margin: 21px 0 0 36px; }
.thumbs { display: flex; gap: 15px; margin-left: 34px; }
.thumb { position: relative; width: 82px; }
.shot { width: 82px; }
.badge { position: absolute; left: 54px; width: 27px; height: 27px; }
.trash { width: 66px; height: 72px; margin: 24px 0 0 21px; }

.dow { font: 500 15px Roboto, sans-serif; fill: #ea3a3f; text-anchor: middle; }
.dom { font: 400 43px Roboto, sans-serif; fill: #262626; text-anchor: middle; }
.letter { font: 500 25px Inter, sans-serif; fill: #ececec; text-anchor: middle; }
</style>
